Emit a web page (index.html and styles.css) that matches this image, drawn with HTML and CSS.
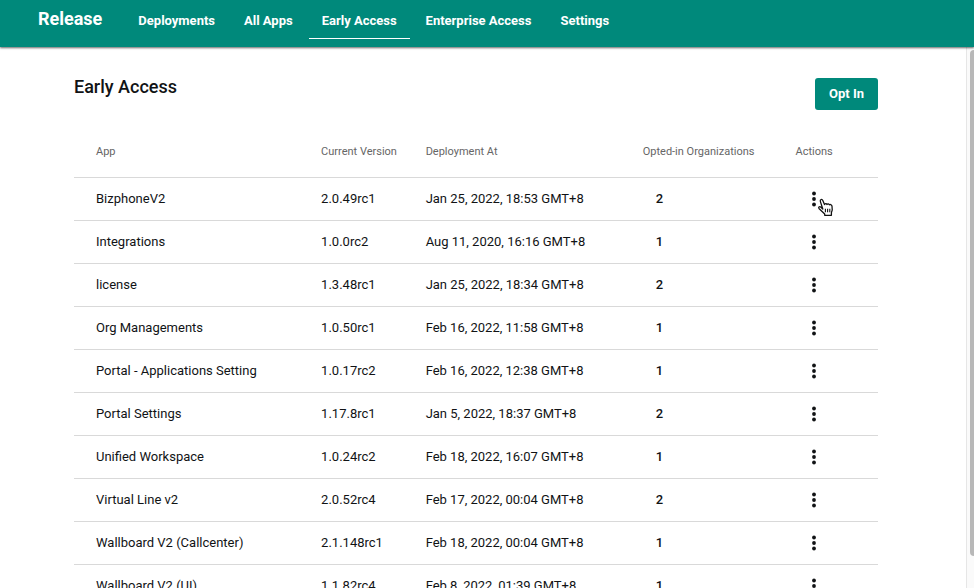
FILE: index.html
```html
<!DOCTYPE html>
<html lang="en">
<head>
<meta charset="utf-8">
<meta name="viewport" content="width=device-width, initial-scale=1">
<title>Release - Early Access</title>
<link rel="stylesheet" href="styles.css">
</head>
<body>
<header class="topbar">
  <a class="brand" href="#">Release</a>
  <nav class="tabs">
    <a class="tab" href="#">Deployments</a>
    <a class="tab" href="#">All Apps</a>
    <a class="tab tab-active" href="#" aria-current="page">Early Access</a>
    <a class="tab" href="#">Enterprise Access</a>
    <a class="tab" href="#">Settings</a>
  </nav>
</header>
<div class="viewport">
  <main class="content">
    <div class="heading">
      <h1>Early Access</h1>
      <button class="primary" type="button">Opt In</button>
    </div>
    <table class="apps">
      <thead>
        <tr><th class="col-app">App</th><th class="col-version">Current Version</th><th class="col-date">Deployment At</th><th class="col-orgs">Opted-in Organizations</th><th>Actions</th></tr>
      </thead>
      <tbody id="rows"></tbody>
    </table>
  </main>
  <div class="scrollbar"><div class="thumb"></div></div>
</div>
<script src="app.js"></script>
</body>
</html>
```
FILE: styles.css
```css
* {
  box-sizing: border-box;
}

body {
  margin: 0;
  height: 100vh;
  display: flex;
  flex-direction: column;
  overflow: hidden;
  background: #fff;
  color: #111315;
  font: 13px/20px Roboto, sans-serif;
}

a {
  color: inherit;
  text-decoration: none;
}

.topbar {
  flex: none;
  display: flex;
  align-items: flex-start;
  gap: 23px;
  height: 47px;
  padding-left: 38px;
  background: #00897b;
  color: #fff;
  box-shadow: 0 1px 2px rgba(0, 0, 0, 0.6);
  position: relative;
}

.brand {
  padding-top: 9px;
  font-size: 18px;
  font-weight: 700;
}

.tabs {
  display: flex;
  gap: 3px;
}

.tab {
  height: 39px;
  padding: 11px 13px 0;
  font-weight: 700;
  border-bottom: 1px solid transparent;
}

.tab-active {
  border-bottom-color: #fff;
}

.viewport {
  flex: 1;
  min-height: 0;
  display: flex;
}

.content {
  flex: 1;
  overflow: hidden;
  padding: 30px 88px 0 74px;
}

.heading {
  display: flex;
  justify-content: space-between;
  align-items: flex-start;
  margin-bottom: 17px;
}

h1 {
  margin: 0;
  font-size: 18px;
  line-height: 20px;
  font-weight: 500;
}

.primary {
  height: 32px;
  margin-top: 1px;
  padding: 0 14px;
  border: 0;
  border-radius: 3px;
  background: #00897b;
  color: #fff;
  font: 700 13px/20px Roboto, sans-serif;
}

.apps {
  width: 100%;
  table-layout: fixed;
  border-collapse: separate;
  border-spacing: 0;
}

th,
td {
  height: 43px;
  padding: 0 0 0 22px;
  border-bottom: 1px solid #d9d9d9;
  text-align: left;
  white-space: nowrap;
}

th {
  height: 51px;
  color: #666;
  font-size: 11px;
  font-weight: 400;
}

.col-app {
  width: 28%;
}

.col-version {
  width: 13%;
}

.col-date {
  width: 27%;
}

.col-orgs {
  width: 19%;
}

.orgs {
  padding-left: 35px;
  font-weight: 500;
}

.menu {
  position: relative;
  display: block;
  width: 38px;
  height: 24px;
  padding: 0;
  border: 0;
  background: none;
  color: #111315;
}

.menu svg {
  display: block;
}

.dots {
  margin: 0 auto;
}

.menu .pointer {
  position: absolute;
  left: 22px;
  top: 11px;
}

.scrollbar {
  width: 8px;
  padding: 3px 0 0 3px;
  border-left: 1px solid #e6e6e6;
  background: #fafafa;
}

.thumb {
  height: 94%;
  border-radius: 4px 0 0 4px;
  background: #b8b8b8;
}
```
FILE: app.js
```javascript
const apps = [
  ["BizphoneV2", "2.0.49rc1", "Jan 25, 2022, 18:53 GMT+8", 2],
  ["Integrations", "1.0.0rc2", "Aug 11, 2020, 16:16 GMT+8", 1],
  ["license", "1.3.48rc1", "Jan 25, 2022, 18:34 GMT+8", 2],
  ["Org Managements", "1.0.50rc1", "Feb 16, 2022, 11:58 GMT+8", 1],
  ["Portal - Applications Setting", "1.0.17rc2", "Feb 16, 2022, 12:38 GMT+8", 1],
  ["Portal Settings", "1.17.8rc1", "Jan 5, 2022, 18:37 GMT+8", 2],
  ["Unified Workspace", "1.0.24rc2", "Feb 18, 2022, 16:07 GMT+8", 1],
  ["Virtual Line v2", "2.0.52rc4", "Feb 17, 2022, 00:04 GMT+8", 2],
  ["Wallboard V2 (Callcenter)", "2.1.148rc1", "Feb 18, 2022, 00:04 GMT+8", 1],
  ["Wallboard V2 (UI)", "1.1.82rc4", "Feb 8, 2022, 01:39 GMT+8", 1]
];

const dots = `<svg class="dots" width="6" height="16" viewBox="0 0 6 16" fill="currentColor" aria-hidden="true">
  <circle cx="3" cy="2.5" r="1.9"/><circle cx="3" cy="8" r="1.9"/><circle cx="3" cy="13.5" r="1.9"/></svg>`;

const pointer = `<svg class="pointer" width="17" height="19" viewBox="0 0 17 19" aria-hidden="true">
  <path d="M5.8 11 3.4 3.6C2.7 1.3 5 .6 5.8 2.6L7.5 6.6C7.9 5.4 9.5 5.3 10 6.5 10.6 5.5 12 5.6 12.4 6.8 13.5 6.1 14.7 6.8 15 8.2 15.5 10.8 15.6 12.4 14.4 14.8V17.3H7.7V16L2.2 10.8C.9 9.5 2.4 8 3.7 9Z" fill="#fff" stroke="#111" stroke-width="1.3" stroke-linejoin="round"/>
  <path d="M8.4 10.7V14.2M10.6 10.7V14.2M12.8 10.7V14.2" stroke="#111" stroke-width="1.1"/></svg>`;

document.getElementById("rows").innerHTML = apps.map(([name, version, date, orgs], i) => `
  <tr><td>${name}</td><td>${version}</td><td>${date}</td><td class="orgs">${orgs}</td>
  <td><button class="menu" type="button" aria-label="Actions for ${name}">${dots}${i === 0 ? pointer : ""}</button></td></tr>`).join("");
```
